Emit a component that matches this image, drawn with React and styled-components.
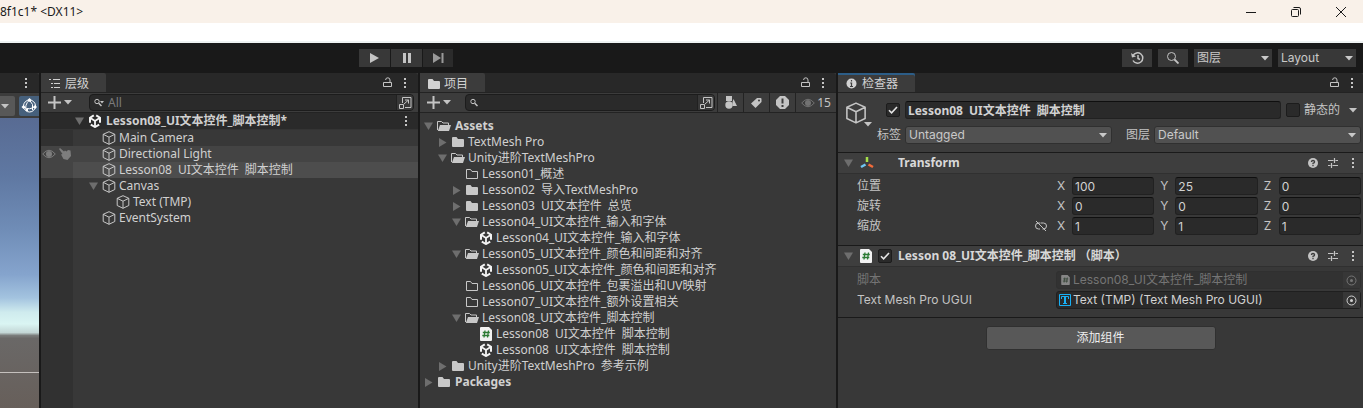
import React from "react";
import styled, { createGlobalStyle, css } from "styled-components";

const GlobalStyle = createGlobalStyle`
  * { box-sizing: border-box; }
  body {
    margin: 0;
    background: #191919;
    color: #d0d0d0;
    font: 12px/16px "Noto Sans", "Noto Sans CJK SC", sans-serif;
  }
  ul { margin: 0; padding: 0; list-style: none; }
  svg { display: block; flex: none; }
  button, input, select { font: inherit; color: inherit; margin: 0; }
`;

const uiFont = css`font-family: Inter, "Noto Sans CJK SC", sans-serif;`;

/* ---------- window frame ---------- */

const Window = styled.div`
  display: flex;
  flex-direction: column;
  min-height: 100vh;
`;

const TitleBar = styled.header`
  display: flex;
  align-items: center;
  justify-content: space-between;
  height: 23px;
  background: #f9f1e9;
  color: #1a1a1a;
`;

const WindowButtons = styled.div`
  display: flex;
`;

const WindowButton = styled.button`
  display: flex;
  align-items: center;
  justify-content: center;
  width: 45px;
  height: 20px;
  padding: 0;
  border: 0;
  background: none;
`;

const MenuStrip = styled.div`
  height: 20px;
  background: #fff;
  border-bottom: 2px solid #eef2f2;
`;

const Toolbar = styled.div`
  display: grid;
  grid-template-columns: 359fr auto 669fr auto;
  align-items: center;
  height: 30px;
  padding-right: 7px;
  background: #191919;
`;

const PlayGroup = styled.div`
  display: flex;
  gap: 1px;
  grid-column: 2;
`;

const ToolGroup = styled.div`
  display: flex;
  gap: 6px;
  grid-column: 4;
`;

const ToolButton = styled.button`
  display: flex;
  align-items: center;
  justify-content: center;
  width: ${(p) => p.$width || 30}px;
  height: 18px;
  padding: 0;
  border: 0;
  color: #c4c4c4;
  background: ${(p) => (p.$dim ? "#2b2b2b" : "#383838")};
`;

/* ---------- panels ---------- */

const Panels = styled.main`
  display: grid;
  flex: 1;
  grid-template-columns: 39px minmax(0, 377fr) minmax(0, 416fr) minmax(0, 525fr);
  gap: 2px;
`;

const Panel = styled.section`
  display: flex;
  flex-direction: column;
  min-width: 0;
  background: #383838;
`;

const TabStrip = styled.div`
  display: flex;
  justify-content: space-between;
  height: 19px;
  background: #282828;
  border-top-right-radius: 3px;
`;

const Tab = styled.div`
  display: flex;
  align-items: center;
  gap: ${(p) => p.$gap || 4}px;
  width: ${(p) => p.$width}px;
  padding: 2px 0 0 8px;
  background: #3c3c3c;
  border-top-right-radius: 2px;
  color: #d2d2d2;
  ${(p) => p.$focused && css`box-shadow: inset 0 2px 0 #2c5d87;`}
`;

const TabActions = styled.div`
  display: flex;
  align-items: center;
  gap: 12px;
  margin-left: auto;
  padding-right: ${(p) => (p.$edge ? 10 : 12)}px;
`;

const IconButton = styled.button`
  display: flex;
  align-items: center;
  justify-content: center;
  padding: 0;
  border: 0;
  background: none;
  color: #c4c4c4;
`;

const PanelBar = styled.div`
  display: flex;
  align-items: center;
  height: 21px;
  padding-left: ${(p) => p.$left || 0}px;
  padding-right: ${(p) => p.$right || 0}px;
  background: #3c3c3c;
  border-top: 1px solid #232323;
  border-bottom: 1px solid #232323;
`;

const AddButton = styled(IconButton)`
  gap: 3px;
  width: 24px;
  margin-right: ${(p) => p.$after}px;
`;

const SearchBox = styled.label`
  display: flex;
  flex: 1;
  align-items: center;
  gap: 4px;
  min-width: 0;
  height: 17px;
  padding-left: 4px;
  border: 1px solid #1c1c1c;
  border-radius: 4px;
  background: #2a2a2a;
  color: #c4c4c4;
`;

const SearchInput = styled.input`
  flex: 1;
  min-width: 0;
  height: 15px;
  padding: 0;
  border: 0;
  outline: 0;
  background: none;
  &::placeholder { color: #7b7b7b; opacity: 1; }
`;

const SearchJump = styled(IconButton)`
  width: 17px;
  height: 15px;
  border-left: 1px solid #212121;
  background: #383838;
  border-radius: 0 3px 3px 0;
`;

const Filters = styled.div`
  display: flex;
  margin-left: 2px;
`;

const FilterButton = styled(IconButton)`
  gap: 2px;
  width: ${(p) => p.$width || 26}px;
  height: 19px;
  border-left: 1px solid #232323;
`;

const HiddenFilter = styled(FilterButton)`
  color: #727272;
`;

const HiddenCount = styled.span`
  color: #c4c4c4;
`;

/* ---------- scene view ---------- */

const SceneBar = styled.div`
  display: flex;
  justify-content: space-between;
  height: 26px;
  padding: 3px 0 2px;
  background: #3c3c3c;
  border-top: 1px solid #232323;
`;

const SceneButton = styled(IconButton)`
  width: ${(p) => (p.$active ? 20 : 15)}px;
  padding-right: ${(p) => (p.$active ? 0 : 6)}px;
  background: ${(p) => (p.$active ? "#46607c" : "#585858")};
  border-radius: ${(p) => (p.$active ? "2px 0 0 2px" : "0 2px 2px 0")};
  color: ${(p) => (p.$active ? "#fff" : "#c4c4c4")};
`;

const SceneView = styled.div`
  flex: 1;
  background:
    linear-gradient(#c4c0bd, #c4c0bd) 0 88% / 100% 1px no-repeat,
    linear-gradient(#586b93 0%, #5f78a2 20%, #6f8cb6 38%, #85a4cd 54%, #a3c3df 62%,
      #cfebee 67%, #daf5f3 71%, #c3d6d5 74%, #7a7c7b 75%, #6a6867 76%, #675f5a 100%);
`;

/* ---------- trees ---------- */

const Tree = styled.ul`
  flex: 1;
  padding-top: ${(p) => p.$top || 0}px;
  ${(p) =>
    p.$gutter &&
    css`background: linear-gradient(90deg, #313131 32px, transparent 32px);`}
`;

const rowTone = { scene: "#2a2a2a", hover: "#444444", selected: "#4d4d4d" };

const TreeRow = styled.li`
  display: flex;
  align-items: center;
  height: 16px;
  padding-left: ${(p) => 2 + p.$depth * 14}px;
  padding-right: 11px;
  font-weight: ${(p) => (p.$bold ? 700 : 400)};
  background: ${(p) => rowTone[p.$tone] || "none"};
`;

const GutterRow = styled(TreeRow)`
  padding-left: 0;
  ${(p) =>
    p.$tone === "scene" &&
    css`
      height: 17px;
      border-bottom: 1px solid #343434;
    `}
`;

const Gutter = styled.span`
  display: flex;
  align-items: center;
  gap: 3px;
  width: 32px;
  height: 16px;
  padding-left: 1px;
  margin-right: ${(p) => p.$depth * 14}px;
  background: ${(p) => (p.$tone === "selected" ? "#444444" : "none")};
  color: #7d7d7d;
`;

const Fold = styled.span`
  display: flex;
  width: 15px;
  padding-left: 2px;
  color: #6e6e6e;
`;

const RowIcon = styled.span`
  display: flex;
  justify-content: center;
  width: 14px;
  margin-right: ${(p) => p.$gap || 3}px;
  color: #c8c8c8;
`;

const RowText = styled.span`
  flex: 1;
  white-space: nowrap;
`;

/* ---------- inspector ---------- */

const ObjectHeader = styled.div`
  display: grid;
  grid-template-columns: 24px minmax(0, 1fr);
  gap: 8px;
  padding: 8px 2px 8px 7px;
  background: #3c3c3c;
  border-top: 1px solid #232323;
`;

const CubeButton = styled(IconButton)`
  position: relative;
  align-self: start;
  width: 21px;
  height: 24px;
`;

const CubeCaret = styled.span`
  position: absolute;
  right: -6px;
  bottom: -2px;
`;

const HeaderLines = styled.div`
  display: flex;
  flex-direction: column;
  gap: 7px;
`;

const NameLine = styled.div`
  display: flex;
  align-items: center;
  gap: 5px;
  height: 18px;
  padding-left: 9px;
`;

const SelectLine = styled.div`
  display: grid;
  grid-template-columns: 1fr 1fr;
  gap: 14px;
`;

const LabelledSelect = styled.label`
  display: flex;
  align-items: center;
  gap: 4px;
  color: #c4c4c4;
`;

const SelectShell = styled.span`
  display: flex;
  flex: ${(p) => (p.$width ? "none" : 1)};
  align-items: center;
  width: ${(p) => (p.$width ? `${p.$width}px` : "auto")};
  height: 18px;
  padding-right: ${(p) => (p.$flat ? 3 : 4)}px;
  color: #c9c9c9;
  background: ${(p) => (p.$flat ? "#383838" : "#515151")};
  border: ${(p) => (p.$flat ? "0" : "1px solid #303030")};
  border-radius: ${(p) => (p.$flat ? 0 : 3)}px;
  ${uiFont}
`;

const SelectField = styled.select`
  flex: 1;
  min-width: 0;
  height: 16px;
  padding: 0 0 0 3px;
  border: 0;
  outline: 0;
  appearance: none;
  background: none;
`;

const CheckShell = styled.span`
  display: grid;
  flex: none;
  width: 14px;
  height: 14px;
  place-items: center;
  background: #2a2a2a;
  border: 1px solid #1c1c1c;
  border-radius: 2px;
  color: #e4e4e4;
  & > * { grid-area: 1 / 1; }
`;

const CheckField = styled.input`
  width: 12px;
  height: 12px;
  appearance: none;
`;

const StaticLabel = styled.label`
  display: flex;
  align-items: center;
  gap: 4px;
  color: #c4c4c4;
`;

const StaticMenu = styled(IconButton)`
  width: 16px;
`;

const TextField = styled.input`
  flex: 1;
  min-width: 0;
  width: 100%;
  height: 18px;
  padding: 0 2px;
  border: 1px solid #212121;
  border-top-color: #0f0f0f;
  border-radius: 3px;
  outline: 0;
  background: #2a2a2a;
  color: #d2d2d2;
  font-weight: ${(p) => (p.$bold ? 700 : 400)};
`;

const Component = styled.section`
  border-top: 1px solid #1a1a1a;
`;

const ComponentHeader = styled.div`
  display: flex;
  align-items: center;
  height: 21px;
  padding: 0 9px 0 6px;
  background: #3e3e3e;
  border-bottom: 1px solid #303030;
`;

const FoldBox = styled.span`
  display: flex;
  width: 14px;
  color: #6e6e6e;
`;

const HeaderIcons = styled.span`
  display: flex;
  align-items: center;
  gap: 6px;
  width: 38px;
  margin-left: 2px;
`;

const ComponentTitle = styled.h2`
  flex: 1;
  margin: 0;
  font-size: 12px;
  line-height: 16px;
  font-weight: 700;
  color: #d8d8d8;
`;

const HeaderActions = styled.div`
  display: grid;
  grid-template-columns: 10px 14px 2px;
  align-items: center;
  justify-items: start;
  gap: 10px;
`;

const Fields = styled.div`
  display: flex;
  flex-direction: column;
  gap: 2px;
  padding: ${(p) => (p.$low ? "4px 2px 8px 19px" : "3px 2px 10px 19px")};
`;

const FieldRow = styled.div`
  display: grid;
  grid-template-columns: minmax(0, 199fr) minmax(0, 305fr);
  align-items: center;
  color: ${(p) => (p.$disabled ? "#757575" : "#c4c4c4")};
`;

const FieldName = styled.span`
  display: flex;
  align-items: center;
  justify-content: space-between;
  padding-right: 9px;
  ${uiFont}
`;

const Axes = styled.div`
  display: grid;
  grid-template-columns: repeat(3, minmax(0, 1fr));
  gap: 6px;
  padding-left: 1px;
`;

const Axis = styled.label`
  display: flex;
  align-items: center;
  ${uiFont}
`;

const AxisName = styled.span`
  flex: none;
  width: 15px;
`;

const ObjectField = styled.div`
  display: flex;
  align-items: center;
  gap: 2px;
  height: 18px;
  padding-left: 2px;
  border: 1px solid ${(p) => (p.$disabled ? "#303030" : "#1f1f1f")};
  border-radius: 3px;
  background: ${(p) => (p.$disabled ? "#323232" : "#2a2a2a")};
  color: ${(p) => (p.$disabled ? "#757575" : "#d2d2d2")};
  ${uiFont}
`;

const ObjectGlyph = styled.span`
  display: flex;
  justify-content: center;
  width: 12px;
`;

const ObjectName = styled.span`
  flex: 1;
  white-space: nowrap;
`;

const PickButton = styled(IconButton)`
  width: 17px;
  height: 16px;
  background: #373737;
  color: inherit;
`;

const InspectorFoot = styled.div`
  display: flex;
  justify-content: center;
  padding: 8px 0;
  border-top: 1px solid #1a1a1a;
`;

const AddComponent = styled.button`
  width: 230px;
  height: 24px;
  padding: 0;
  border: 1px solid #303030;
  border-radius: 3px;
  background: #585858;
  color: #eeeeee;
`;

/* ---------- icons ---------- */

const Svg = ({ w = 12, h = w, box, children }) => (
  <svg width={w} height={h} viewBox={box || `0 0 ${w} ${h}`} fill="none" stroke="currentColor" aria-hidden="true">
    {children}
  </svg>
);

const Caret = () => (
  <Svg w={8} h={5}><path d="M0 0h8L4 4.5z" fill="currentColor" stroke="none" /></Svg>
);
const FoldOpen = () => (
  <Svg w={9} h={8}><path d="M0 .5h9L4.5 8z" fill="currentColor" stroke="none" /></Svg>
);
const FoldShut = () => (
  <Svg w={9} h={9}><path d="M1 0v9l7.500-4.500z" fill="currentColor" stroke="none" /></Svg>
);
const Kebab = () => (
  <Svg w={2} h={10}><path d="M0 0h2v2H0zM0 4h2v2H0zM0 8h2v2H0z" fill="currentColor" stroke="none" /></Svg>
);
const Lock = () => (
  <Svg w={9} h={11}>
    <path d="M.5 5.500h8v4h-8zM7 5.500V3a2.200 2.200 0 0 0-4.400 0" />
  </Svg>
);
const Plus = () => (
  <Svg w={13}><path d="M6.500 0v13M0 6.500h13" strokeWidth="2" /></Svg>
);
const Magnifier = ({ caret }) => (
  <Svg w={caret ? 10 : 9} h={9}>
    <circle cx="3" cy="3.500" r="2.200" />
    <path d="M4.700 5.200L7.500 8" strokeWidth="1.500" />
    {caret && <path d="M6 3h4L8 5.500z" fill="currentColor" stroke="none" />}
  </Svg>
);
const Jump = () => (
  <Svg w={13}>
    <path d="M3.500 7V1.500h8.500v10H6" />
    <path d="M.5 8.500h4v4h-4zM5 8l4.500-4M6 4h3.500v3.500" />
  </Svg>
);
const Cube = ({ size = 14 }) => (
  <Svg w={size} box="0 0 14 14">
    <path d="M7 .7l5.800 2.600v7.200L7 13.300l-5.800-2.800V3.300zM1.200 3.300L7 6.200l5.800-2.900M7 6.200v7.100" strokeLinejoin="round" />
  </Svg>
);
const UnityMark = () => (
  <Svg w={14}>
    <g stroke="#f4f4f4" strokeWidth="2">
      <path d="M5.800 1.300L2 3.700V8.800M8.200 1.300L12 3.700V8.800M2.800 10.600L7 13l4.200-2.400" />
      <path d="M2 3.700L7 7l5-3.300M7 7v6" strokeWidth="1.800" />
    </g>
  </Svg>
);
const FolderShut = () => (
  <Svg w={12} h={10}><path d="M0 1q0-1 1-1h3.500l1.500 2h5q1 0 1 1v6q0 1-1 1H1q-1 0-1-1z" fill="currentColor" stroke="none" /></Svg>
);
const FolderEmpty = () => (
  <Svg w={12} h={10}><path d="M.5.5h4L6 2.500h5.500v7H.5z" /></Svg>
);
const FolderOpen = () => (
  <Svg w={14} h={10}>
    <path d="M.5 9V.5h4L6 2h5.500v2" />
    <path d="M3 4h11l-2 6H.8z" fill="currentColor" stroke="none" />
  </Svg>
);
const Script = ({ dim }) => (
  <Svg w={dim ? 9 : 12} h={dim ? 10 : 14} box="0 0 12 14">
    <path d="M1 0h8l3 3v10q0 1-1 1H1q-1 0-1-1V1q0-1 1-1z" fill={dim ? "#868686" : "#f2f2f2"} stroke="none" />
    <path d="M5 3.500l-1 7M8.500 3.500l-1 7M2.800 5.500h7M2.300 8.500h7" stroke={dim ? "#3b4a3c" : "#2c7a33"} strokeWidth="1.300" />
  </Svg>
);
const TextMark = () => (
  <Svg w={12}>
    <g stroke="#18b0f5">
      <path d="M.5.500h11v11H.5z" />
      <path d="M2.500 5V2.500h7V5M4 9.500h4" />
      <path d="M6 2.500v7" strokeWidth="2" />
    </g>
  </Svg>
);
const Eye = () => (
  <Svg w={14} h={10}>
    <path d="M.7 5Q7-2.500 13.300 5 7 12.500.7 5z" />
    <circle cx="7" cy="5" r="3" fill="currentColor" stroke="none" />
  </Svg>
);
const Hand = () => (
  <Svg w={12}>
    <path d="M0 1l1-1 4 3.500 1-1 1.500 1L9 2l2.500.5L12 8l-3.500 4-4-1L2 6.500 3.500 6z" fill="currentColor" stroke="none" />
  </Svg>
);
const Help = () => (
  <Svg w={10}>
    <circle cx="5" cy="5" r="5" fill="currentColor" stroke="none" />
    <path d="M3.400 4Q3.500 2.500 5 2.500T6.600 3.900Q6.500 5 5 5.300v.9M5 7v1.200" stroke="#3e3e3e" strokeWidth="1.300" />
  </Svg>
);
const Preset = () => (
  <Svg w={10}>
    <path d="M0 2.500h5.500M7.500 2.500H10M6.500 0v5M0 7.500h2.500M4.500 7.500H10M3.500 5v5" strokeWidth="1.200" />
  </Svg>
);
const Pick = () => (
  <Svg w={11}>
    <circle cx="5.500" cy="5.500" r="4.500" />
    <circle cx="5.500" cy="5.500" r="1.500" fill="currentColor" stroke="none" />
  </Svg>
);
const Check = () => (
  <Svg w={10}><path d="M1 5.200l2.600 2.600L9 2" strokeWidth="1.600" /></Svg>
);

/* ---------- shared pieces ---------- */

const Checkbox = ({ label, checked }) => (
  <CheckShell>
    <CheckField type="checkbox" aria-label={label} defaultChecked={checked} />
    {checked && <Check />}
  </CheckShell>
);

const Select = ({ label, value, ...shell }) => (
  <SelectShell {...shell}>
    <SelectField aria-label={label} defaultValue={value}>
      <option>{value}</option>
    </SelectField>
    <Caret />
  </SelectShell>
);

const Actions = ({ edge }) => (
  <TabActions $edge={edge}>
    <IconButton aria-label="锁定"><Lock /></IconButton>
    <IconButton aria-label="菜单"><Kebab /></IconButton>
  </TabActions>
);

const FoldMark = () => <FoldBox><FoldOpen /></FoldBox>;

const icons = {
  cube: <Cube />,
  unity: <UnityMark />,
  script: <Script />,
  shut: <FolderShut />,
  open: <FolderOpen />,
  empty: <FolderEmpty />,
};

const RowBody = ({ item }) => (
  <>
    <Fold>{item.fold === "open" ? <FoldOpen /> : item.fold === "shut" ? <FoldShut /> : null}</Fold>
    <RowIcon $gap={item.gap}>{icons[item.icon]}</RowIcon>
    <RowText>{item.text}</RowText>
  </>
);

const hierarchy = [
  { depth: 0, fold: "open", icon: "unity", gap: 4, text: "Lesson08_UI文本控件_脚本控制*", tone: "scene", bold: true },
  { depth: 1, icon: "cube", text: "Main Camera" },
  { depth: 1, icon: "cube", text: "Directional Light", tone: "hover" },
  { depth: 1, icon: "cube", text: "Lesson08\u2002UI文本控件\u2002脚本控制", tone: "selected" },
  { depth: 1, fold: "open", icon: "cube", text: "Canvas" },
  { depth: 2, icon: "cube", text: "Text (TMP)" },
  { depth: 1, icon: "cube", text: "EventSystem" },
];

const project = [
  { depth: 0, fold: "open", icon: "open", gap: 4, text: "Assets", bold: true },
  { depth: 1, fold: "shut", icon: "shut", text: "TextMesh Pro" },
  { depth: 1, fold: "open", icon: "open", text: "Unity进阶TextMeshPro" },
  { depth: 2, icon: "empty", text: "Lesson01_概述" },
  { depth: 2, fold: "shut", icon: "shut", text: "Lesson02\u2002导入TextMeshPro" },
  { depth: 2, fold: "shut", icon: "shut", text: "Lesson03\u2002UI文本控件\u2002总览" },
  { depth: 2, fold: "open", icon: "open", text: "Lesson04_UI文本控件_输入和字体" },
  { depth: 3, icon: "unity", text: "Lesson04_UI文本控件_输入和字体" },
  { depth: 2, fold: "open", icon: "open", text: "Lesson05_UI文本控件_颜色和间距和对齐" },
  { depth: 3, icon: "unity", text: "Lesson05_UI文本控件_颜色和间距和对齐" },
  { depth: 2, icon: "empty", text: "Lesson06_UI文本控件_包裹溢出和UV映射" },
  { depth: 2, icon: "empty", text: "Lesson07_UI文本控件_额外设置相关" },
  { depth: 2, fold: "open", icon: "open", text: "Lesson08_UI文本控件_脚本控制" },
  { depth: 3, icon: "script", text: "Lesson08\u2002UI文本控件\u2002脚本控制" },
  { depth: 3, icon: "unity", text: "Lesson08\u2002UI文本控件\u2002脚本控制" },
  { depth: 1, fold: "shut", icon: "shut", text: "Unity进阶TextMeshPro\u2002参考示例" },
  { depth: 0, fold: "shut", icon: "shut", gap: 4, text: "Packages", bold: true },
];

const transform = [
  { name: "位置", values: ["100", "25", "0"] },
  { name: "旋转", values: ["0", "0", "0"] },
  { name: "缩放", values: ["1", "1", "1"], link: true },
];

const ComponentActions = () => (
  <HeaderActions>
    <IconButton aria-label="帮助"><Help /></IconButton>
    <IconButton aria-label="预设"><Preset /></IconButton>
    <IconButton aria-label="菜单"><Kebab /></IconButton>
  </HeaderActions>
);

/* ---------- panels ---------- */

const ScenePanel = () => (
  <Panel>
    <TabStrip>
      <TabActions><IconButton aria-label="菜单"><Kebab /></IconButton></TabActions>
    </TabStrip>
    <SceneBar>
      <SceneButton aria-label="选项"><Caret /></SceneButton>
      <SceneButton $active aria-label="Gizmos">
        <Svg w={16}>
          <circle cx="8.500" cy="8" r="6" />
          <path d="M8.500 2Q3 7 5.500 13M8.500 2q4.500 4 3 10M2.500 9q6 4 12-1" />
          <path d="M8.500 0l2 2-2 2-2-2zM2.500 7l2 2-2 2-2-2zM14 7l2 2-2 2-2-2zM5 11h2v2H5z" fill="currentColor" stroke="none" />
        </Svg>
      </SceneButton>
    </SceneBar>
    <SceneView />
  </Panel>
);

const HierarchyPanel = () => (
  <Panel>
    <TabStrip>
      <Tab $width={65} $gap={5}>
        <Svg w={11} h={9}>
          <path d="M0 .5h2M4 .5h7M2 4.500h2M5 4.500h6M2 8.500h2M5 8.500h6" />
        </Svg>
        层级
      </Tab>
      <Actions />
    </TabStrip>
    <PanelBar $left={7} $right={4}>
      <AddButton $after={17} aria-label="创建"><Plus /><Caret /></AddButton>
      <SearchBox>
        <Magnifier caret />
        <SearchInput placeholder="All" aria-label="搜索层级" />
        <SearchJump aria-label="打开搜索"><Jump /></SearchJump>
      </SearchBox>
    </PanelBar>
    <Tree $gutter>
      {hierarchy.map((item, i) => (
        <GutterRow key={i} $depth={0} $tone={item.tone} $bold={item.bold}>
          <Gutter $depth={item.depth} $tone={item.tone}>
            {item.tone === "hover" && <><Eye /><Hand /></>}
          </Gutter>
          <RowBody item={item} />
          {item.tone === "scene" && <IconButton aria-label="菜单"><Kebab /></IconButton>}
        </GutterRow>
      ))}
    </Tree>
  </Panel>
);

const ProjectPanel = () => (
  <Panel>
    <TabStrip>
      <Tab $width={65}><FolderShut />项目</Tab>
      <Actions />
    </TabStrip>
    <PanelBar $left={7}>
      <AddButton $after={14} aria-label="创建"><Plus /><Caret /></AddButton>
      <SearchBox>
        <Magnifier />
        <SearchInput aria-label="搜索项目" />
        <SearchJump aria-label="打开搜索"><Jump /></SearchJump>
      </SearchBox>
      <Filters>
        <FilterButton aria-label="按类型">
          <Svg w={12} h={13}>
            <path d="M1 0h6v5H1zM8.500 3L12 10H7.500V6z" fill="currentColor" stroke="none" />
            <circle cx="4" cy="9" r="3.700" fill="currentColor" stroke="none" />
          </Svg>
        </FilterButton>
        <FilterButton aria-label="按标签">
          <Svg w={11}>
            <path d="M6 1h3.500q1 0 1 1v3L4.500 11 0 6.500z" fill="currentColor" stroke="none" />
            <circle cx="8" cy="3.500" r="1" fill="#3c3c3c" stroke="none" />
          </Svg>
        </FilterButton>
        <FilterButton aria-label="按状态">
          <Svg w={13}>
            <path d="M4 0h5l4 4v5l-4 4H4L0 9V4z" fill="currentColor" stroke="none" />
            <path d="M6.500 2.500v5M6.500 9v2" stroke="#3c3c3c" strokeWidth="2" />
          </Svg>
        </FilterButton>
        <HiddenFilter $width={41} aria-label="隐藏的包"><Eye /><HiddenCount>15</HiddenCount></HiddenFilter>
      </Filters>
    </PanelBar>
    <Tree $top={5}>
      {project.map((item, i) => (
        <TreeRow key={i} $depth={item.depth} $bold={item.bold}>
          <RowBody item={item} />
        </TreeRow>
      ))}
    </Tree>
  </Panel>
);

const InspectorPanel = () => (
  <Panel>
    <TabStrip>
      <Tab $width={77} $gap={5} $focused>
        <Svg w={11}>
          <circle cx="5.500" cy="5.500" r="5" fill="currentColor" stroke="none" />
          <path d="M5.500 2v1.500M5.500 4.500V9M4.200 5h2M4 8.500h3" stroke="#3c3c3c" strokeWidth="1.200" />
        </Svg>
        检查器
      </Tab>
      <Actions edge />
    </TabStrip>
    <ObjectHeader>
      <CubeButton aria-label="图标">
        <Cube size={22} />
        <CubeCaret><Caret /></CubeCaret>
      </CubeButton>
      <HeaderLines>
        <NameLine>
          <Checkbox label="启用" checked />
          <TextField $bold aria-label="名称" defaultValue={"Lesson08\u2002UI文本控件\u2002脚本控制"} />
          <StaticLabel><Checkbox label="静态的" />静态的</StaticLabel>
          <StaticMenu aria-label="静态选项"><Caret /></StaticMenu>
        </NameLine>
        <SelectLine>
          <LabelledSelect>标签<Select label="标签" value="Untagged" /></LabelledSelect>
          <LabelledSelect>图层<Select label="图层" value="Default" /></LabelledSelect>
        </SelectLine>
      </HeaderLines>
    </ObjectHeader>

    <Component>
      <ComponentHeader>
        <FoldMark />
        <HeaderIcons>
          <Svg w={14}>
            <path d="M7 1v5" stroke="#a6e04a" strokeWidth="2.500" />
            <path d="M5.500 8.500L1 11" stroke="#6fc8f5" strokeWidth="2.500" />
            <path d="M8.500 8.500l4.500 2.500" stroke="#f26b3a" strokeWidth="2.500" />
          </Svg>
        </HeaderIcons>
        <ComponentTitle>Transform</ComponentTitle>
        <ComponentActions />
      </ComponentHeader>
      <Fields>
        {transform.map((row) => (
          <FieldRow key={row.name}>
            <FieldName>
              {row.name}
              {row.link && (
                <Svg w={12} h={10}>
                  <path d="M5 2H3.500a3 3 0 0 0 0 6H5M5.500 2h3a3 3 0 0 1 0 6H7.500M1 0l10 10" />
                </Svg>
              )}
            </FieldName>
            <Axes>
              {["X", "Y", "Z"].map((axis, i) => (
                <Axis key={axis}>
                  <AxisName>{axis}</AxisName>
                  <TextField defaultValue={row.values[i]} />
                </Axis>
              ))}
            </Axes>
          </FieldRow>
        ))}
      </Fields>
    </Component>

    <Component>
      <ComponentHeader>
        <FoldMark />
        <HeaderIcons>
          <Script />
          <Checkbox label="启用脚本" checked />
        </HeaderIcons>
        <ComponentTitle>Lesson 08_UI文本控件_脚本控制 （脚本）</ComponentTitle>
        <ComponentActions />
      </ComponentHeader>
      <Fields $low>
        <FieldRow $disabled>
          <FieldName>脚本</FieldName>
          <ObjectField $disabled>
            <ObjectGlyph><Script dim /></ObjectGlyph>
            <ObjectName>Lesson08_UI文本控件_脚本控制</ObjectName>
            <PickButton disabled aria-label="选择脚本"><Pick /></PickButton>
          </ObjectField>
        </FieldRow>
        <FieldRow>
          <FieldName>Text Mesh Pro UGUI</FieldName>
          <ObjectField>
            <TextMark />
            <ObjectName>Text (TMP) (Text Mesh Pro UGUI)</ObjectName>
            <PickButton aria-label="选择对象"><Pick /></PickButton>
          </ObjectField>
        </FieldRow>
      </Fields>
    </Component>

    <InspectorFoot>
      <AddComponent>添加组件</AddComponent>
    </InspectorFoot>
  </Panel>
);

export default function App() {
  return (
    <Window>
      <GlobalStyle />
      <TitleBar>
        <span>8f1c1* &lt;DX11&gt;</span>
        <WindowButtons>
          <WindowButton aria-label="最小化"><Svg w={10}><path d="M0 5.500h10" /></Svg></WindowButton>
          <WindowButton aria-label="还原">
            <Svg w={10}>
              <rect x=".5" y="2.500" width="7" height="7" rx="1" />
              <path d="M2.500.5H8q1.500 0 1.500 1.500v5.500" />
            </Svg>
          </WindowButton>
          <WindowButton aria-label="关闭"><Svg w={10}><path d="M0 0l10 10M10 0L0 10" /></Svg></WindowButton>
        </WindowButtons>
      </TitleBar>
      <MenuStrip />
      <Toolbar>
        <PlayGroup>
          <ToolButton $width={31} aria-label="播放"><Svg w={9} h={10}><path d="M0 0l9 5-9 5z" fill="currentColor" stroke="none" /></Svg></ToolButton>
          <ToolButton $width={31} aria-label="暂停"><Svg w={8} h={10}><path d="M0 0h3v10H0zM5 0h3v10H5z" fill="currentColor" stroke="none" /></Svg></ToolButton>
          <ToolButton $dim aria-label="单步"><Svg w={11} h={10}><path d="M0 0l8 5-8 5zM8.500 0h2v10h-2z" fill="#999" stroke="none" /></Svg></ToolButton>
        </PlayGroup>
        <ToolGroup>
          <ToolButton aria-label="历史">
            <Svg w={13} h={12}>
              <path d="M2 3.500A5.200 5.200 0 1 1 2 8.500M7 3v3.500l2 1" strokeWidth="1.500" />
              <path d="M0 1l1 4.500 4-1z" fill="currentColor" stroke="none" />
            </Svg>
          </ToolButton>
          <ToolButton aria-label="搜索">
            <Svg w={12}><circle cx="4.500" cy="4.500" r="4" /><path d="M7.500 7.500l4 4" strokeWidth="1.800" /></Svg>
          </ToolButton>
          <Select $flat $width={78} label="图层" value="图层" />
          <Select $flat $width={78} label="布局" value="Layout" />
        </ToolGroup>
      </Toolbar>
      <Panels>
        <ScenePanel />
        <HierarchyPanel />
        <ProjectPanel />
        <InspectorPanel />
      </Panels>
    </Window>
  );
}
